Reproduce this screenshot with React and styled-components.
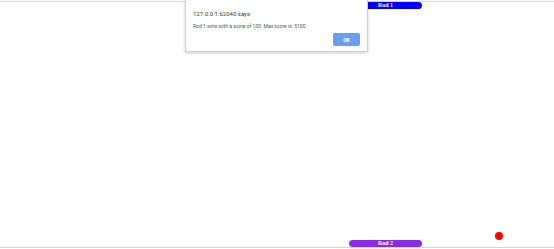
import React from "react";
import styled, { createGlobalStyle } from "styled-components";

const Global = createGlobalStyle`
  html, body { margin: 0; padding: 0; background: #fff; }
  body { width: 554px; height: 249px; overflow: hidden; font-family: "Liberation Serif", serif; }
`;

const Board = styled.div`
  position: relative;
  margin-top: 1px;
  height: 245px;
  border-top: 1px solid #d6d6d6;
  border-bottom: 1px solid #d6d6d6;
`;

const Rod = styled.div`
  position: absolute;
  left: 349px;
  width: 73px;
  height: 7px;
  ${(p) => (p.$bottom ? "bottom: 0;" : "top: 0;")}
  background: ${(p) => p.$color};
  border-radius: 4px;
  color: #fff;
  font-family: "Liberation Serif", serif;
  font-weight: bold;
  font-size: 6px;
  line-height: 7px;
  text-align: center;
`;

const Ball = styled.div`
  position: absolute;
  left: 495px;
  top: 230px;
  width: 8px;
  height: 8px;
  border-radius: 50%;
  background: #ff0000;
`;

const Dialog = styled.div`
  position: absolute;
  left: 185px;
  top: 0;
  width: 183px;
  height: 52px;
  box-sizing: border-box;
  background: #fff;
  border: 1px solid #d0d0d0;
  border-top: none;
  box-shadow: 0 1px 3px rgba(0, 0, 0, 0.2);
  padding: 9px 7px 0 7px;
  font-family: "Roboto", "Liberation Sans", sans-serif;
  display: flex;
  flex-direction: column;
`;

const Title = styled.div`
  font-size: 6px;
  line-height: 9px;
  color: #3a3a3a;
`;

const Message = styled.div`
  margin-top: 5px;
  font-size: 5px;
  line-height: 7px;
  color: #555;
`;

const Actions = styled.div`
  display: flex;
  justify-content: flex-end;
  margin-top: 3px;
`;

const OkButton = styled.div`
  width: 27px;
  height: 13px;
  border-radius: 2px;
  background: #6c9ef0;
  color: #fff;
  font-size: 5px;
  font-weight: bold;
  display: flex;
  align-items: center;
  justify-content: center;
`;

export default function App() {
  return (
    <>
      <Global />
      <Board>
        <Rod $color="#0000ff">Rod 1</Rod>
        <Ball />
        <Rod $color="#8a2be2" $bottom>Rod 2</Rod>
      </Board>
      <Dialog>
        <Title>127.0.0.1:62040 says</Title>
        <Message>Rod 1 wins with a score of 100. Max score is: 5100</Message>
        <Actions>
          <OkButton>OK</OkButton>
        </Actions>
      </Dialog>
    </>
  );
}
